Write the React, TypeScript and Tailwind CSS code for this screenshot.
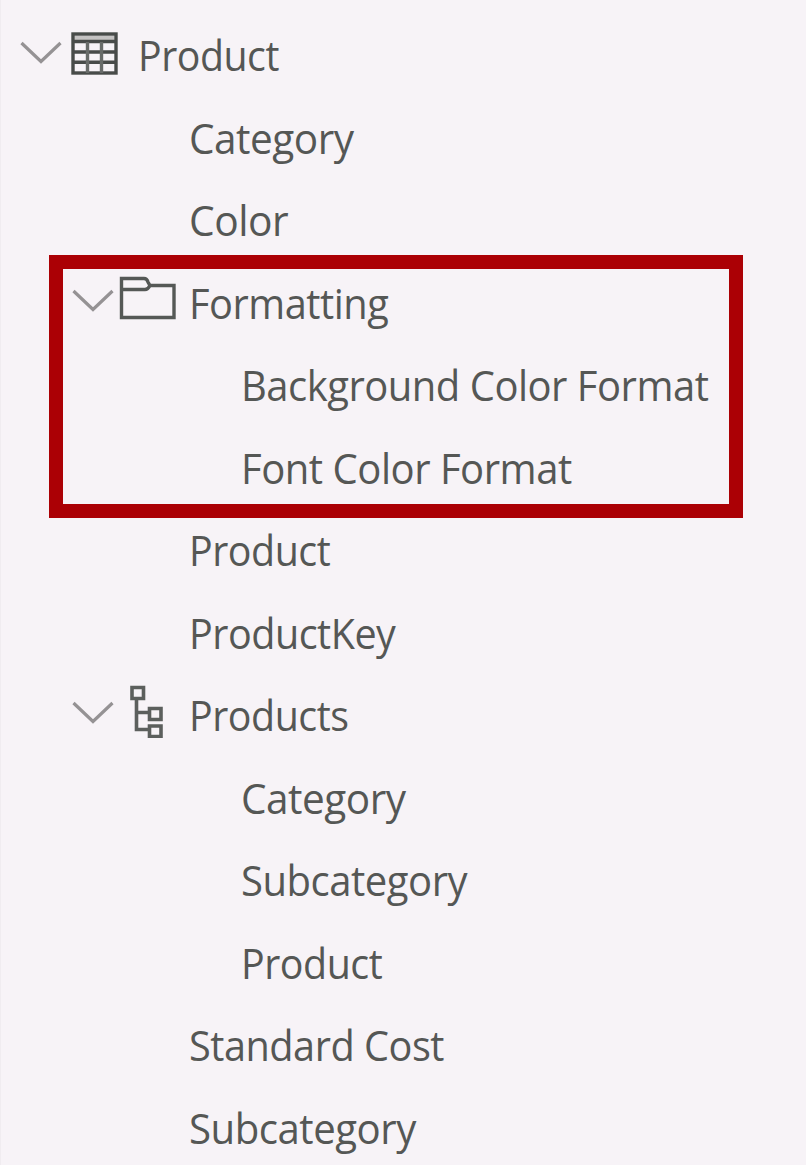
import type { ReactNode } from "react";

function Chevron() {
  return (
    <svg className="h-6 w-[42px] shrink-0" viewBox="0 0 42 24" fill="none" stroke="#959294" strokeWidth="3.2">
      <path d="M1.5 2 21 20.5 40.5 2" />
    </svg>
  );
}

function TableIcon() {
  return (
    <svg className="h-[43px] w-[47px] shrink-0" viewBox="0 0 47 43" fill="none" stroke="#484b49" strokeWidth="3.4">
      <path d="M3.5 6H43.5" stroke="#c4c2c2" strokeWidth="5" />
      <rect x="2" y="2" width="43" height="39" />
      <path d="M2 9.5H45M2 20H45M2 30.2H45" />
      <path d="M16.5 10V41M30.5 10V41" stroke="#686b69" />
    </svg>
  );
}

function FolderIcon() {
  return (
    <svg className="h-11 w-[57px] shrink-0" viewBox="0 0 57 44" fill="none" stroke="#555856" strokeWidth="3.4">
      <path d="M2.5 2.5H25Q28 2.5 29 6L31 9.5H55V41.5H2.5ZM2.5 13.5H26Q29 13.5 31 9.5" />
    </svg>
  );
}

function HierarchyIcon() {
  return (
    <svg className="h-[53px] w-[33px] shrink-0" viewBox="0 0 33 53" fill="none" stroke="#5c5f5d" strokeWidth="3.6">
      <path d="M2 2.5H13.5V13.5H2ZM19.5 23.5H31V34.5H19.5ZM19.5 41H31V51.5H19.5ZM6.5 14V44.5H19.5M6.5 27.5H19.5" />
    </svg>
  );
}

function Row({ className, label, fit, children }: { className: string; label: string; fit: string; children?: ReactNode }) {
  return (
    <div className={`flex h-[82.5px] items-center whitespace-nowrap ${className}`}>
      {children}
      <span className={`-mt-[2px] inline-block origin-left tracking-[-0.5px] ${fit}`}>{label}</span>
    </div>
  );
}

export default function App() {
  return (
    <main className="relative h-[1165px] w-[806px] overflow-hidden border-l border-[#f0ecf0] bg-[#f7f3f7] pt-[15px] font-['Open_Sans','Noto_Sans',sans-serif] text-[42px] leading-none text-[#555755]">
      <Row className="pl-[19px]" label="Product" fit="ml-[20px] scale-x-[0.935]">
        <div className="-mt-1.5"><Chevron /></div>
        <div className="-mt-[5px] ml-[9px]"><TableIcon /></div>
      </Row>
      <Row className="pl-[188px]" label="Category" fit="scale-x-[0.965]" />
      <Row className="pl-[188px]" label="Color" fit="scale-x-[0.97]" />
      <Row className="pl-[71px]" label="Formatting" fit="ml-[13px] scale-x-[0.947]">
        <div className="-mt-1.5"><Chevron /></div>
        <div className="-mt-3 ml-[5px]"><FolderIcon /></div>
      </Row>
      <Row className="pl-[240px]" label="Background Color Format" fit="scale-x-[0.951]" />
      <Row className="pl-[240px]" label="Font Color Format" fit="scale-x-[0.953]" />
      <Row className="pl-[188px]" label="Product" fit="scale-x-[0.937]" />
      <Row className="pl-[188px]" label="ProductKey" fit="scale-x-[0.94]" />
      <Row className="pl-[71px]" label="Products" fit="ml-[26px] scale-x-[0.937]">
        <div className="-mt-1.5"><Chevron /></div>
        <div className="-mt-2.5 ml-4"><HierarchyIcon /></div>
      </Row>
      <Row className="pl-[240px]" label="Category" fit="scale-x-[0.965]" />
      <Row className="pl-[240px]" label="Subcategory" fit="scale-x-[0.953]" />
      <Row className="pl-[240px]" label="Product" fit="scale-x-[0.937]" />
      <Row className="pl-[188px]" label="Standard Cost" fit="scale-x-[0.944]" />
      <Row className="pl-[188px]" label="Subcategory" fit="scale-x-[0.956]" />
      <div className="pointer-events-none absolute top-[255px] left-12 h-[263px] w-[694px] border-[14px] border-[#ab0005]" />
    </main>
  );
}
